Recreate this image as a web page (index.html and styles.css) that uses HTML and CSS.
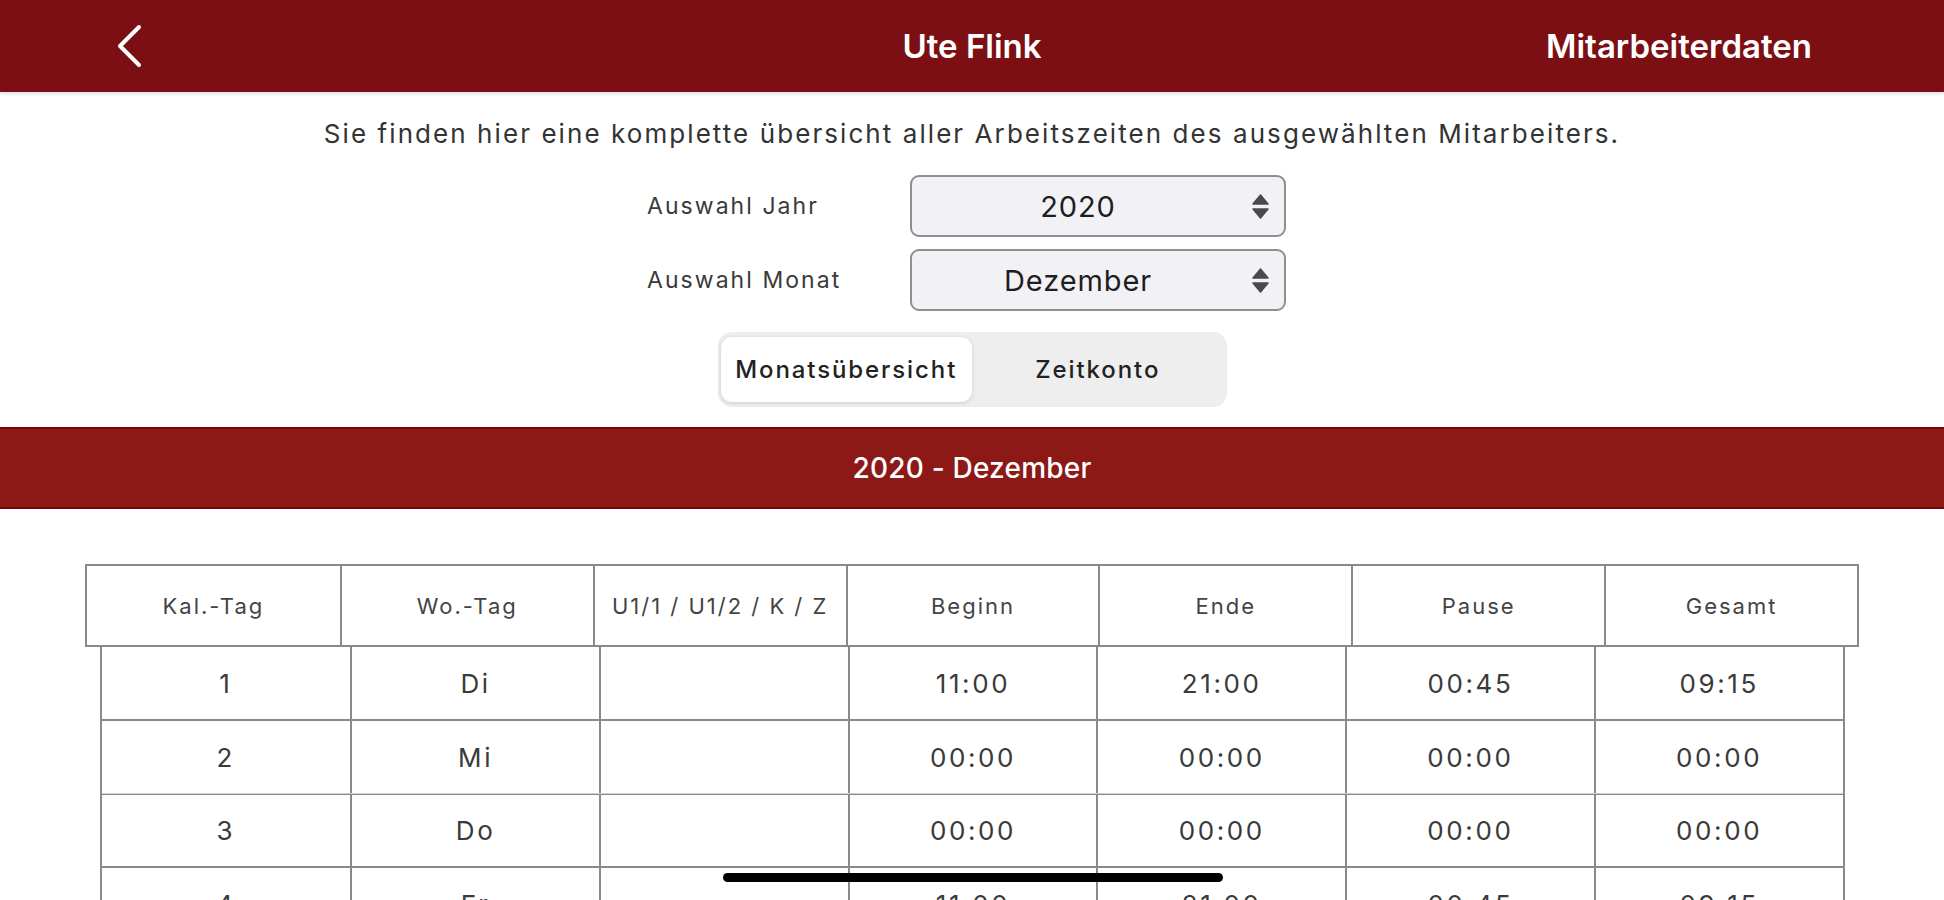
FILE: index.html
```html
<!DOCTYPE html>
<html lang="de">
<head>
<meta charset="utf-8">
<title>Ute Flink – Mitarbeiterdaten</title>
<link rel="stylesheet" href="styles.css">
</head>
<body>
<header class="topbar">
  <div class="back">
    <svg class="back-icon" viewBox="0 0 26 44" width="26" height="44" aria-hidden="true">
      <polyline points="22,3 3,22 22,41" fill="none" stroke="#fff" stroke-width="4" stroke-linecap="round" stroke-linejoin="round"/>
    </svg>
  </div>
  <div class="title">Ute Flink</div>
  <div class="action">Mitarbeiterdaten</div>
</header>

<p class="intro">Sie finden hier eine komplette übersicht aller Arbeitszeiten des ausgewählten Mitarbeiters.</p>

<div class="form">
  <label class="label">Auswahl Jahr</label>
  <div class="select"><span class="select-value">2020</span><svg class="updown" viewBox="0 0 21 25" width="21" height="25" aria-hidden="true"><path d="M10.5 1 L18 10 L3 10 Z M3 15 L18 15 L10.5 24 Z" fill="#4a4a4a" stroke="#4a4a4a" stroke-width="1.5" stroke-linejoin="round"/></svg></div>
  <label class="label">Auswahl Monat</label>
  <div class="select"><span class="select-value">Dezember</span><svg class="updown" viewBox="0 0 21 25" width="21" height="25" aria-hidden="true"><path d="M10.5 1 L18 10 L3 10 Z M3 15 L18 15 L10.5 24 Z" fill="#4a4a4a" stroke="#4a4a4a" stroke-width="1.5" stroke-linejoin="round"/></svg></div>
</div>

<div class="seg">
  <div class="seg-item active">Monatsübersicht</div>
  <div class="seg-item">Zeitkonto</div>
</div>

<div class="banner">2020 - Dezember</div>

<div class="thead">
  <div class="th">Kal.-Tag</div>
  <div class="th">Wo.-Tag</div>
  <div class="th">U1/1 / U1/2 / K / Z</div>
  <div class="th">Beginn</div>
  <div class="th">Ende</div>
  <div class="th">Pause</div>
  <div class="th">Gesamt</div>
</div>

<div class="tbody">
  <div class="tr"><div class="td">1</div><div class="td">Di</div><div class="td"></div><div class="td">11:00</div><div class="td">21:00</div><div class="td">00:45</div><div class="td">09:15</div></div>
  <div class="tr"><div class="td">2</div><div class="td">Mi</div><div class="td"></div><div class="td">00:00</div><div class="td">00:00</div><div class="td">00:00</div><div class="td">00:00</div></div>
  <div class="tr light-top"><div class="td">3</div><div class="td">Do</div><div class="td"></div><div class="td">00:00</div><div class="td">00:00</div><div class="td">00:00</div><div class="td">00:00</div></div>
  <div class="tr"><div class="td">4</div><div class="td">Fr</div><div class="td"></div><div class="td">11:00</div><div class="td">21:00</div><div class="td">00:45</div><div class="td">09:15</div></div>
</div>

<div class="home-indicator"></div>
</body>
</html>
```

FILE: styles.css
```css
html, body {
  margin: 0;
  padding: 0;
  background: #ffffff;
}

body {
  font-family: Inter, "Liberation Sans", Arial, sans-serif;
  color: #333333;
}

.topbar {
  height: 92px;
  background: #7b0f14;
  display: grid;
  grid-template-columns: 1fr auto 1fr;
  align-items: center;
  color: #ffffff;
  box-shadow: 0 2px 3px rgba(0, 0, 0, 0.12);
}

.back {
  padding-left: 117px;
  display: flex;
  align-items: center;
}

.back-icon {
  display: block;
}

.title {
  font-size: 33px;
  font-weight: 600;
}

.action {
  justify-self: end;
  padding-right: 132px;
  font-size: 33px;
  font-weight: 600;
}

.intro {
  margin: 0;
  padding-top: 27px;
  text-align: center;
  font-size: 26px;
  line-height: 30px;
  letter-spacing: 2.07px;
  color: #333333;
}

.form {
  width: 650px;
  box-sizing: border-box;
  padding-right: 11px;
  margin: 26px auto 0;
  display: grid;
  grid-template-columns: 263px 376px;
  row-gap: 12px;
  align-items: center;
}

.label {
  font-size: 23px;
  letter-spacing: 2.05px;
  color: #3a3a3a;
}

.select {
  height: 62px;
  box-sizing: border-box;
  border: 2px solid #8e8e93;
  border-radius: 9px;
  background: #f2f2f6;
  display: flex;
  align-items: center;
  padding-right: 13px;
  gap: 6px;
}

.select-value {
  flex: 1;
  text-align: center;
  font-size: 29px;
  letter-spacing: 0.9px;
  color: #1e1e1e;
}

.updown {
  display: block;
}

.seg {
  width: 509px;
  height: 75px;
  box-sizing: border-box;
  margin: 21px auto 0;
  padding: 5px 3px;
  background: #eeeeef;
  border-radius: 14px;
  display: grid;
  grid-template-columns: 1fr 1fr;
}

.seg-item {
  display: flex;
  align-items: center;
  justify-content: center;
  font-size: 24px;
  font-weight: 500;
  letter-spacing: 1.9px;
  color: #222222;
  border-radius: 11px;
}

.seg-item.active {
  background: #ffffff;
  box-shadow: 0 1px 4px rgba(0, 0, 0, 0.14);
}

.banner {
  margin-top: 20px;
  height: 82px;
  box-sizing: border-box;
  background: #8c1916;
  border-top: 2px solid #7a0505;
  border-bottom: 2px solid #7a0505;
  color: #ffffff;
  font-size: 28px;
  font-weight: 500;
  letter-spacing: 0.2px;
  display: flex;
  align-items: center;
  justify-content: center;
}

.thead {
  width: 1774px;
  height: 83px;
  box-sizing: border-box;
  margin: 55px auto 0;
  border: 2px solid #8a8a8a;
  display: grid;
  grid-template-columns: repeat(7, 1fr);
}

.th {
  display: flex;
  align-items: center;
  justify-content: center;
  font-size: 22px;
  letter-spacing: 2px;
  color: #444444;
}

.th + .th {
  border-left: 2px solid #8a8a8a;
}

.tbody {
  width: 1745px;
  margin: 0 auto;
  border-left: 2px solid #8a8a8a;
  border-right: 2px solid #8a8a8a;
  box-sizing: border-box;
}

.tr {
  height: 74px;
  box-sizing: border-box;
  border-bottom: 2px solid #8a8a8a;
  display: grid;
  grid-template-columns: repeat(7, 1fr);
}

.tr.light-top {
  border-top: 1px solid #d0d0d0;
  margin-top: -2px;
  height: 75px;
}

.td {
  display: flex;
  align-items: center;
  justify-content: center;
  font-size: 26px;
  letter-spacing: 2.6px;
  color: #3a3a3a;
}

.td + .td {
  border-left: 2px solid #8a8a8a;
}

.home-indicator {
  position: fixed;
  left: 50%;
  bottom: 18px;
  width: 500px;
  height: 9px;
  margin-left: -249px;
  border-radius: 5px;
  background: #000000;
}
```
